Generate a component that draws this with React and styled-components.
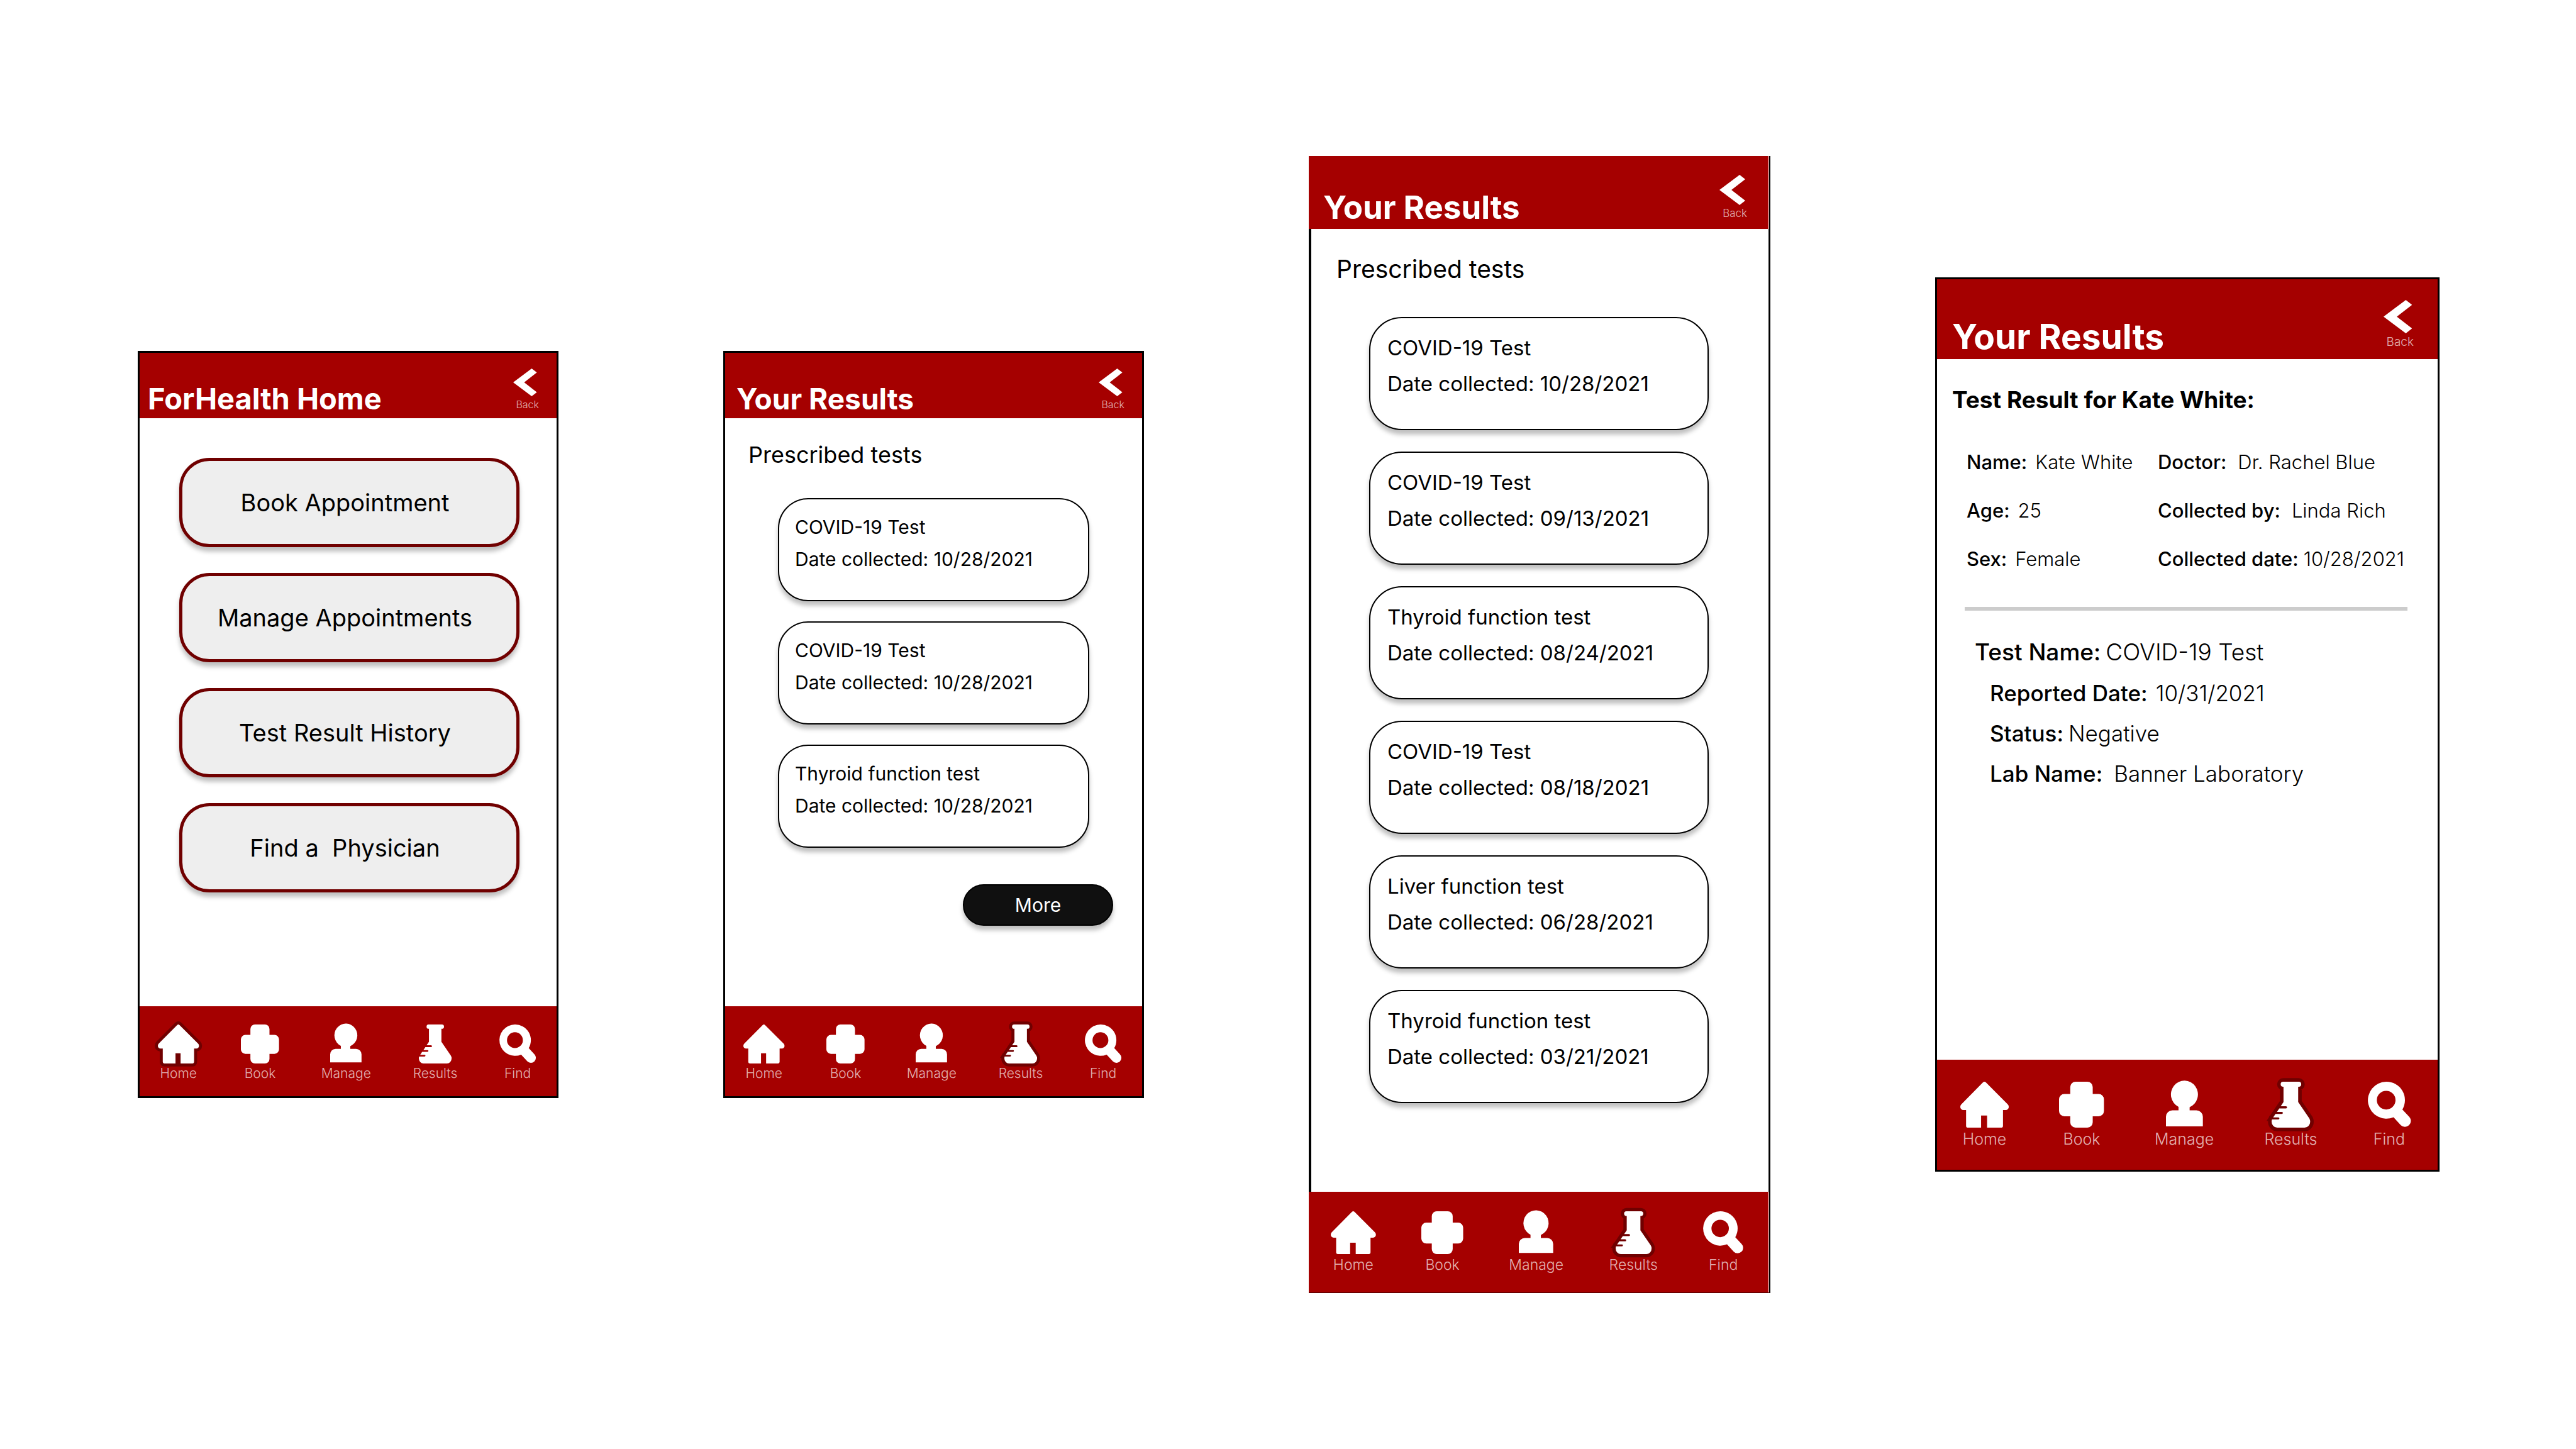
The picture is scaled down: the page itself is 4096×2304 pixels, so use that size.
import React from "react";
import styled, { createGlobalStyle, css, ThemeProvider } from "styled-components";

const RED = "#a50000";
const DARK_RED = "#700000";

const GlobalStyle = createGlobalStyle`
  *, *::before, *::after { box-sizing: border-box; }
  body { margin: 0; background: #fff; color: #000; }
  h1, h2, p, ul, dl, dd { margin: 0; padding: 0; }
  ul { list-style: none; }
  button { font: inherit; color: inherit; cursor: pointer; }
  body, button { font-family: Inter, "Liberation Sans", sans-serif; font-weight: 400; }
`;

/* Size tokens for the three screen sizes */
const small = {
  title: 47, titleLine: 56, headerHeight: 104, headerPad: "0 28px 3px 13px",
  chevron: 44, back: 16, backLine: 18, backGap: 4, backBottom: 10,
  section: 36, sectionLine: 44, sectionPad: 37, sectionGap: 47,
  card: 30, cardLine: 51, cardPad: "19px 25px 39px", cardGap: 32, cardRadius: 48, cardInset: "0 84px 0 84px",
  bodyTop: 36, bodyBottom: 128,
  navPad: "29px 33px 23px 29px", icon: 62, nav: 21, navLine: 26,
  frame: css`border: 3px solid #000;`,
  bodyFrame: css``,
};
const smallResults = { ...small, title: 46, headerPad: "0 28px 3px 18px" };
const medium = {
  ...small,
  title: 51, titleLine: 60, headerHeight: 116, headerPad: "0 34px 4px 23px",
  chevron: 48, back: 17, backLine: 20, backGap: 3, backBottom: 11,
  section: 39, sectionLine: 48, sectionPad: 40, sectionGap: 52,
  card: 33, cardLine: 57, cardPad: "19px 27px 43px", cardGap: 34, cardRadius: 52, cardInset: "0 94px 0 92px",
  bodyTop: 40, bodyBottom: 141,
  navPad: "31px 40px 30px 35px", icon: 68, nav: 23, navLine: 28,
  frame: css`
    border-right: 2px solid #000;
    border-bottom: 1px solid #500000;
    padding-right: 1px;
  `,
  bodyFrame: css`
    border-left: 4px solid #000;
    border-right: 1px solid #000;
  `,
};
const large = {
  ...small,
  title: 55, titleLine: 66, headerHeight: 127, headerPad: "0 38px 3px 24px",
  chevron: 53, back: 19, backLine: 22, backGap: 3, backBottom: 13,
  navPad: "35px 43px 34px 37px", icon: 73, nav: 25, navLine: 30,
};

const Board = styled.main`
  min-height: 100vh;
  display: grid;
  grid-template-columns: 669fr 669fr 734fr 802fr;
  gap: 262px;
  align-items: center;
  padding: 0 217px 0 219px;
`;

const Phone = styled.section`
  background: #fff;
  ${(p) => p.theme.frame}
`;

const Header = styled.header`
  display: flex;
  align-items: flex-end;
  justify-content: space-between;
  height: ${(p) => p.theme.headerHeight}px;
  padding: ${(p) => p.theme.headerPad};
  background: ${RED};
  color: #fff;
`;

const Title = styled.h1`
  font-size: ${(p) => p.theme.title}px;
  line-height: ${(p) => p.theme.titleLine}px;
  font-weight: 700;
`;

const BackButton = styled.button`
  display: flex;
  flex-direction: column;
  align-items: flex-end;
  gap: ${(p) => p.theme.backGap}px;
  padding: 0 0 ${(p) => p.theme.backBottom}px;
  border: 0;
  background: none;
  color: #fff;
  svg {
    height: ${(p) => p.theme.chevron}px;
    width: auto;
    margin-right: 3px;
  }
`;

const BackLabel = styled.span`
  font-size: ${(p) => p.theme.back}px;
  line-height: ${(p) => p.theme.backLine}px;
  font-weight: 300;
  color: rgba(255, 255, 255, 0.7);
`;

const Body = styled.div`
  ${(p) => p.theme.bodyFrame}
`;

const MenuList = styled.ul`
  display: grid;
  gap: 41px;
  padding: 63px 59px 181px 63px;
`;

const MenuButton = styled.button`
  width: 100%;
  height: 142px;
  padding: 0 14px 0 0;
  border: 5px solid ${DARK_RED};
  border-radius: 48px;
  background: #eee;
  box-shadow: 0 7px 7px rgba(0, 0, 0, 0.25);
  font-size: 38px;
  line-height: 46px;
  white-space: pre;
`;

const ResultsBody = styled(Body)`
  display: flex;
  flex-direction: column;
  padding: ${(p) => p.theme.bodyTop}px 0 ${(p) => p.theme.bodyBottom}px;
`;

const SectionTitle = styled.h2`
  margin-bottom: ${(p) => p.theme.sectionGap}px;
  padding-left: ${(p) => p.theme.sectionPad}px;
  font-size: ${(p) => p.theme.section}px;
  line-height: ${(p) => p.theme.sectionLine}px;
  font-weight: 400;
`;

const CardList = styled.ul`
  display: grid;
  gap: ${(p) => p.theme.cardGap}px;
  margin: ${(p) => p.theme.cardInset};
`;

const Card = styled.button`
  display: block;
  width: 100%;
  padding: ${(p) => p.theme.cardPad};
  border: 2px solid #000;
  border-radius: ${(p) => p.theme.cardRadius}px;
  background: #fff;
  box-shadow: 0 7px 7px rgba(0, 0, 0, 0.25);
  text-align: left;
`;

const CardLine = styled.span`
  display: block;
  font-size: ${(p) => p.theme.card}px;
  line-height: ${(p) => p.theme.cardLine}px;
  white-space: nowrap;
`;

const MoreButton = styled.button`
  align-self: flex-end;
  width: 239px;
  height: 66px;
  margin: 58px 46px 0 0;
  padding: 0;
  border: 2px solid #000;
  border-radius: 33px;
  background: #101010;
  box-shadow: 0 7px 7px rgba(0, 0, 0, 0.25);
  color: #fff;
  font-size: 30px;
`;

const Nav = styled.nav`
  display: flex;
  justify-content: space-between;
  padding: ${(p) => p.theme.navPad};
  background: ${RED};
`;

const NavLink = styled.a`
  display: flex;
  flex-direction: column;
  align-items: center;
  gap: 3px;
  color: rgba(255, 255, 255, 0.7);
  font-size: ${(p) => p.theme.nav}px;
  line-height: ${(p) => p.theme.navLine}px;
  font-weight: 300;
  text-decoration: none;
`;

const NavIcon = styled.svg`
  display: block;
  height: ${(p) => p.theme.icon}px;
  width: auto;
  overflow: visible;
  fill: #fff;
  ${(p) =>
    p.$active &&
    css`
      stroke: ${DARK_RED};
      stroke-width: 64px;
      paint-order: stroke;
    `}
`;

const ReportBody = styled(Body)`
  padding: 42px 0 423px;
`;

const ReportTitle = styled.h2`
  padding-left: 24px;
  font-size: 37px;
  line-height: 46px;
  font-weight: 700;
`;

const PatientFacts = styled.dl`
  display: grid;
  grid-template-columns: 304px 1fr;
  margin-top: 37px;
  padding-left: 47px;
  font-size: 31px;
  line-height: 77px;
`;

const gaps = { tight: 8, normal: 13, wide: 18 };

const Fact = styled.div`
  display: flex;
  gap: ${(p) => gaps[p.$gap || "normal"]}px;
  white-space: nowrap;
`;

const Term = styled.dt`
  font-weight: 500;
`;

const Value = styled.dd`
  font-weight: 300;
`;

const Divider = styled.hr`
  height: 6px;
  margin: 38px 48px 33px 44px;
  border: 0;
  background: #ccc;
`;

const TestFacts = styled.dl`
  padding-left: 84px;
  font-size: 35px;
  line-height: 64px;
`;

const TestName = styled(Fact)`
  margin-left: -24px;
  font-size: 37px;
  line-height: 66px;
`;

const ICONS = {
  Home: {
    viewBox: "0 0 436 413",
    d: "M204 6Q217 -6 230 6L427 203Q436 212 436 226A28 28 0 0 1 408 255H384V397Q384 413 368 413H241V304H187V413H68Q52 413 52 397V255H28A28 28 0 0 1 0 226Q0 212 9 203Z",
  },
  Book: {
    viewBox: "0 0 404 413",
    d: "M149 0H255A48 48 0 0 1 303 48V110H356A48 48 0 0 1 404 158V263A48 48 0 0 1 356 311H303V365A48 48 0 0 1 255 413H149A48 48 0 0 1 101 365V311H48A48 48 0 0 1 0 263V158A48 48 0 0 1 48 110H101V48A48 48 0 0 1 149 0Z",
  },
  Manage: {
    viewBox: "0 10 332 413",
    d: "M113 236A121.500 124 0 1 1 213 239V268H274A58 58 0 0 1 332 326V412H0V326A58 58 0 0 1 58 268H113Z",
  },
  Results: {
    viewBox: "0 0 347 413",
    d: "M104 0H244A22.500 22.500 0 0 1 244 45H239V183L339 330Q347 343 347 360A50 53 0 0 1 297 413H50A50 53 0 0 1 0 360Q0 348 3 339H61A9 9 0 0 0 61 321H14L35 290H92A9.500 9.500 0 0 0 92 271H48L69 240H129A10 10 0 0 0 129 220H82L107 183V45H104A22.500 22.500 0 0 1 104 0Z",
  },
  Find: {
    viewBox: "0 0 386 413",
    d: "M165 0A166 166 0 1 0 231 319L296 390A53 53 0 0 0 372 316L311 250A166 166 0 0 0 165 0ZM165 82A84 84 0 1 1 165 250A84 84 0 1 1 165 82Z",
  },
};

function ScreenHeader({ title }) {
  return (
    <Header>
      <Title>{title}</Title>
      <BackButton type="button">
        <svg viewBox="0 0 71 83" fill="#fff" aria-hidden="true">
          <path d="M0 41.500L55.500 0L71 12L33 41.500L71 71L55.500 83Z" />
        </svg>
        <BackLabel>Back</BackLabel>
      </BackButton>
    </Header>
  );
}

function BottomNav({ active }) {
  return (
    <Nav aria-label="Main">
      {Object.entries(ICONS).map(([name, icon]) => (
        <NavLink key={name} href={`#${name.toLowerCase()}`}>
          <NavIcon viewBox={icon.viewBox} $active={name === active} aria-hidden="true">
            <path d={icon.d} fillRule="evenodd" />
          </NavIcon>
          {name}
        </NavLink>
      ))}
    </Nav>
  );
}

function Screen({ theme, title, active, children }) {
  return (
    <ThemeProvider theme={theme}>
      <Phone>
        <ScreenHeader title={title} />
        {children}
        <BottomNav active={active} />
      </Phone>
    </ThemeProvider>
  );
}

function ResultCards({ tests }) {
  return (
    <CardList>
      {tests.map(([name, date], i) => (
        <li key={i}>
          <Card type="button">
            <CardLine>{name}</CardLine>
            <CardLine>Date collected: {date}</CardLine>
          </Card>
        </li>
      ))}
    </CardList>
  );
}

const MENU = ["Book Appointment", "Manage Appointments", "Test Result History", "Find a  Physician"];

const RECENT_TESTS = [
  ["COVID-19 Test", "10/28/2021"],
  ["COVID-19 Test", "10/28/2021"],
  ["Thyroid function test", "10/28/2021"],
];

const ALL_TESTS = [
  ["COVID-19 Test", "10/28/2021"],
  ["COVID-19 Test", "09/13/2021"],
  ["Thyroid function test", "08/24/2021"],
  ["COVID-19 Test", "08/18/2021"],
  ["Liver function test", "06/28/2021"],
  ["Thyroid function test", "03/21/2021"],
];

const PATIENT = [
  ["Name:", "Kate White"],
  ["Doctor:", "Dr. Rachel Blue", "wide"],
  ["Age:", "25"],
  ["Collected by:", "Linda Rich", "wide"],
  ["Sex:", "Female"],
  ["Collected date:", "10/28/2021", "tight"],
];

const TEST = [
  ["Reported Date:", "10/31/2021"],
  ["Status:", "Negative", "tight"],
  ["Lab Name:", "Banner Laboratory", "wide"],
];

export default function App() {
  return (
    <>
      <GlobalStyle />
      <Board>
        <Screen theme={small} title="ForHealth Home" active="Home">
          <MenuList>
            {MENU.map((item) => (
              <li key={item}>
                <MenuButton type="button">{item}</MenuButton>
              </li>
            ))}
          </MenuList>
        </Screen>

        <Screen theme={smallResults} title="Your Results" active="Results">
          <ResultsBody>
            <SectionTitle>Prescribed tests</SectionTitle>
            <ResultCards tests={RECENT_TESTS} />
            <MoreButton type="button">More</MoreButton>
          </ResultsBody>
        </Screen>

        <Screen theme={medium} title="Your Results" active="Results">
          <ResultsBody>
            <SectionTitle>Prescribed tests</SectionTitle>
            <ResultCards tests={ALL_TESTS} />
          </ResultsBody>
        </Screen>

        <Screen theme={large} title="Your Results" active="Results">
          <ReportBody>
            <ReportTitle>Test Result for Kate White:</ReportTitle>
            <PatientFacts>
              {PATIENT.map(([term, value, gap]) => (
                <Fact key={term} $gap={gap}>
                  <Term>{term}</Term>
                  <Value>{value}</Value>
                </Fact>
              ))}
            </PatientFacts>
            <Divider />
            <TestFacts>
              <TestName $gap="tight">
                <Term>Test Name:</Term>
                <Value>COVID-19 Test</Value>
              </TestName>
              {TEST.map(([term, value, gap]) => (
                <Fact key={term} $gap={gap}>
                  <Term>{term}</Term>
                  <Value>{value}</Value>
                </Fact>
              ))}
            </TestFacts>
          </ReportBody>
        </Screen>
      </Board>
    </>
  );
}
